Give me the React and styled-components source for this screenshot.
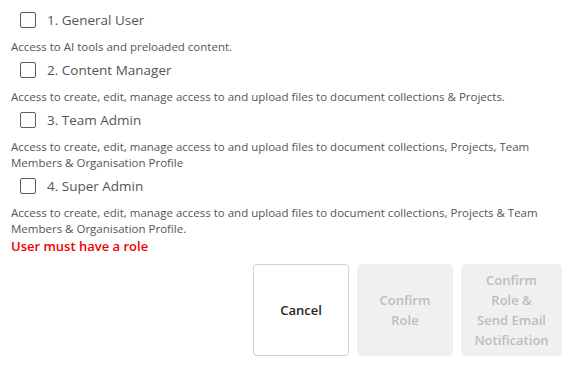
import React, { useState } from "react";
import styled, { createGlobalStyle } from "styled-components";

const GlobalStyle = createGlobalStyle`
  body {
    margin: 0;
    background: #ffffff;
    font-family: "Open Sans", "Noto Sans", sans-serif;
  }
`;

const Page = styled.div`
  width: 572px;
  height: 367px;
  box-sizing: border-box;
  padding: 5px 10px 0 11px;
  display: flex;
  flex-direction: column;
`;

const RoleList = styled.div`
  display: flex;
  flex-direction: column;
  width: 535px;
`;

const RoleRow = styled.label`
  display: flex;
  align-items: center;
  gap: 11px;
  height: 30px;
  padding-left: 9px;
  cursor: pointer;
`;

const Box = styled.span`
  width: 16px;
  height: 16px;
  box-sizing: border-box;
  border: 1px solid #5c5c5c;
  border-radius: 2px;
  background: ${({ checked }) => (checked ? "#0f6cbd" : "#fff")};
`;

const RoleName = styled.span`
  font-size: 13.5px;
  color: #555;
`;

const Description = styled.p`
  margin: 4px 0 0;
  font-size: 11.5px;
  line-height: 16px;
  color: #555;
`;

const ErrorText = styled.div`
  font-size: 13px;
  line-height: 18px;
  font-weight: 600;
  color: #f00000;
`;

const Actions = styled.div`
  display: flex;
  justify-content: flex-end;
  gap: 8px;
  margin-top: 9px;
`;

const ActionButton = styled.button`
  width: ${({ wide }) => (wide ? "101px" : "96px")};
  height: 92px;
  box-sizing: border-box;
  padding: 0 10px;
  border-radius: 4px;
  border: 1px solid ${({ disabled }) => (disabled ? "#f0f0f0" : "#d1d1d1")};
  background: ${({ disabled }) => (disabled ? "#f0f0f0" : "#fff")};
  color: ${({ disabled }) => (disabled ? "#bdbdbd" : "#242424")};
  font-family: "Open Sans", sans-serif;
  font-size: 13px;
  font-weight: 600;
  line-height: 20px;
  cursor: ${({ disabled }) => (disabled ? "default" : "pointer")};
`;

const roles = [
  {
    name: "1. General User",
    desc: "Access to AI tools and preloaded content.",
  },
  {
    name: "2. Content Manager",
    desc: "Access to create, edit, manage access to and upload files to document collections & Projects.",
  },
  {
    name: "3. Team Admin",
    desc: "Access to create, edit, manage access to and upload files to document collections, Projects, Team Members & Organisation Profile",
  },
  {
    name: "4. Super Admin",
    desc: "Access to create, edit, manage access to and upload files to document collections, Projects & Team Members & Organisation Profile.",
  },
];

export default function App() {
  const [role, setRole] = useState(null);

  return (
    <>
      <GlobalStyle />
      <Page>
        <RoleList>
          {roles.map((r) => (
            <React.Fragment key={r.name}>
              <RoleRow onClick={() => setRole(r.name)}>
                <Box checked={role === r.name} />
                <RoleName>{r.name}</RoleName>
              </RoleRow>
              <Description>{r.desc}</Description>
            </React.Fragment>
          ))}
          {!role && <ErrorText>User must have a role</ErrorText>}
        </RoleList>
        <Actions>
          <ActionButton>Cancel</ActionButton>
          <ActionButton disabled={!role}>Confirm Role</ActionButton>
          <ActionButton wide disabled={!role}>
            Confirm Role &amp; Send{"\u00a0"}Email Notification
          </ActionButton>
        </Actions>
      </Page>
    </>
  );
}
